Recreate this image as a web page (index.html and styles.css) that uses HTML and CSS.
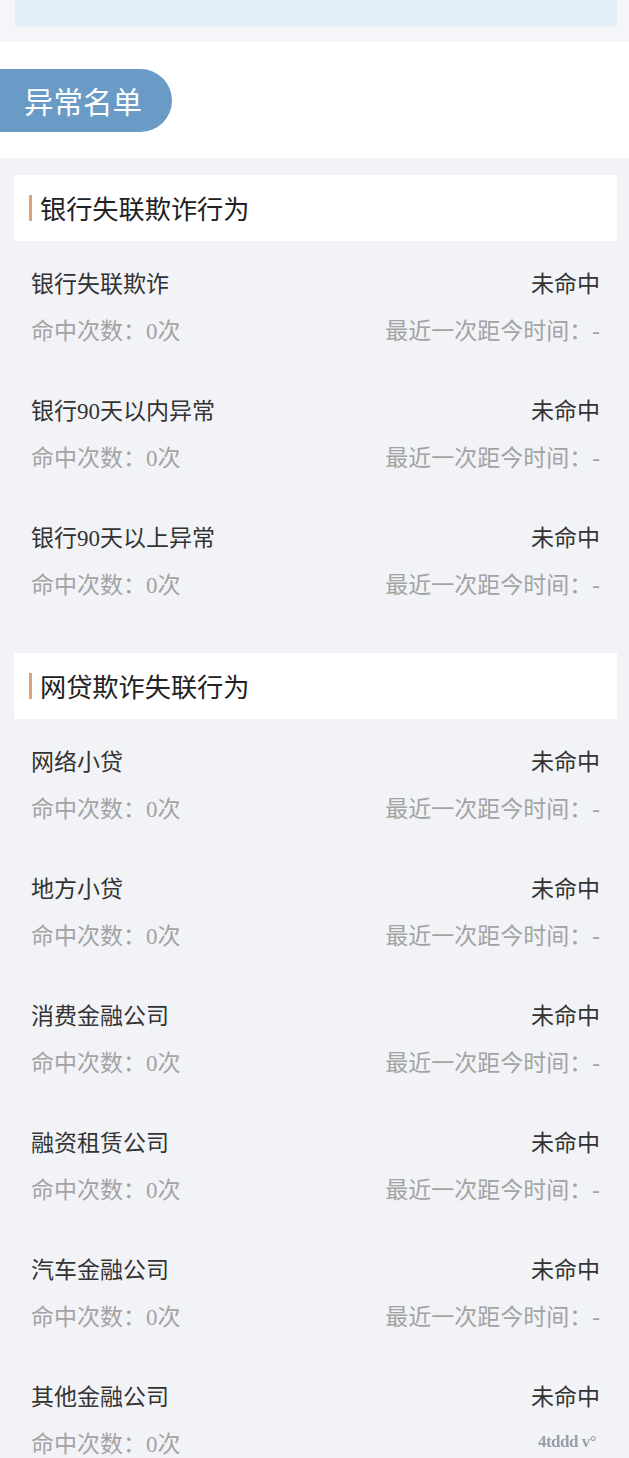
FILE: index.html
```html
<!DOCTYPE html>
<html lang="zh-CN">
<head>
<meta charset="utf-8">
<title>异常名单</title>
<link rel="stylesheet" href="styles.css">
</head>
<body>
<div class="top-strip"><div class="top-card"></div></div>
<div class="banner"><div class="pill">异常名单</div></div>
<main class="content">
  <section class="group">
    <div class="group-head"><span class="bar"></span><span class="group-title">银行失联欺诈行为</span></div>
    <div class="item"><div class="row"><span class="name">银行失联欺诈</span><span class="status">未命中</span></div><div class="row sub"><span>命中次数：0次</span><span>最近一次距今时间：-</span></div></div>
    <div class="item"><div class="row"><span class="name">银行90天以内异常</span><span class="status">未命中</span></div><div class="row sub"><span>命中次数：0次</span><span>最近一次距今时间：-</span></div></div>
    <div class="item"><div class="row"><span class="name">银行90天以上异常</span><span class="status">未命中</span></div><div class="row sub"><span>命中次数：0次</span><span>最近一次距今时间：-</span></div></div>
  </section>
  <section class="group">
    <div class="group-head"><span class="bar"></span><span class="group-title">网贷欺诈失联行为</span></div>
    <div class="item"><div class="row"><span class="name">网络小贷</span><span class="status">未命中</span></div><div class="row sub"><span>命中次数：0次</span><span>最近一次距今时间：-</span></div></div>
    <div class="item"><div class="row"><span class="name">地方小贷</span><span class="status">未命中</span></div><div class="row sub"><span>命中次数：0次</span><span>最近一次距今时间：-</span></div></div>
    <div class="item"><div class="row"><span class="name">消费金融公司</span><span class="status">未命中</span></div><div class="row sub"><span>命中次数：0次</span><span>最近一次距今时间：-</span></div></div>
    <div class="item"><div class="row"><span class="name">融资租赁公司</span><span class="status">未命中</span></div><div class="row sub"><span>命中次数：0次</span><span>最近一次距今时间：-</span></div></div>
    <div class="item"><div class="row"><span class="name">汽车金融公司</span><span class="status">未命中</span></div><div class="row sub"><span>命中次数：0次</span><span>最近一次距今时间：-</span></div></div>
    <div class="item"><div class="row"><span class="name">其他金融公司</span><span class="status">未命中</span></div><div class="row sub"><span>命中次数：0次</span><span class="mark">4tddd v°</span></div></div>
  </section>
</main>
</body>
</html>
```
FILE: styles.css
```css
html, body {
  margin: 0;
  padding: 0;
}
body {
  background: #f2f3f7;
  font-family: "Liberation Serif", "Noto Sans CJK SC", sans-serif;
  width: 629px;
  overflow: hidden;
}
.top-strip {
  background: #f5f6f9;
  padding: 0 12px 14px 15px;
}
.top-card {
  height: 26px;
  background: #e4eef9;
  border-bottom: 2px solid #eef2f7;
}
.banner {
  background: #ffffff;
  padding: 27px 0 26px;
}
.pill {
  width: 148px;
  height: 63px;
  padding-left: 24px;
  background: #6a9ac6;
  border-radius: 0 32px 32px 0;
  color: #ffffff;
  font-family: "Noto Sans CJK SC", sans-serif;
  font-size: 29.5px;
  line-height: 62px;
}
.content {
  padding-top: 17px;
}
.group {
  margin-bottom: 31px;
}
.group-head {
  margin: 0 12px 0 14px;
  height: 66px;
  background: #ffffff;
  display: flex;
  align-items: center;
  padding-left: 15px;
}
.bar {
  width: 3px;
  height: 26px;
  background: #dca27c;
  margin-right: 8px;
}
.group-title {
  font-family: "Noto Sans CJK SC", sans-serif;
  font-size: 26.2px;
  color: #222222;
  line-height: 30px;
}
.item {
  padding: 26px 29px 24px 31px;
  display: flex;
  flex-direction: column;
  gap: 17px;
}
.row {
  display: flex;
  justify-content: space-between;
  align-items: center;
  height: 30px;
  font-size: 23px;
  color: #333333;
}
.row.sub {
  color: #a3a3a3;
}
.mark {
  font-family: "Liberation Serif", serif;
  font-size: 17px;
  font-weight: bold;
  color: #9a9ea8;
  filter: blur(0.7px);
  letter-spacing: -0.5px;
  padding-right: 4px;
}
```
